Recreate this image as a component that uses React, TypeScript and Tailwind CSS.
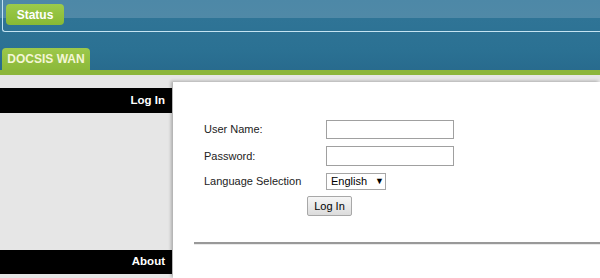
import * as React from "react";

function Field({ label, children }: { label: string; children: React.ReactNode }) {
  return (
    <div className="flex items-center">
      <span className="w-[122px] text-[11px] text-[#222]">{label}</span>
      {children}
    </div>
  );
}

export default function App() {
  return (
    <div className="w-[600px] h-[278px] overflow-hidden font-['Liberation_Sans',Arial,sans-serif] bg-[#e6e6e6]">
      {/* header */}
      <div className="h-[70px] bg-[linear-gradient(to_bottom,#4d88a7_0px,#5089a7_18px,#2f7496_18px,#2b7193_50px,#286b8e_70px)] pt-0">
        <div className="ml-[2px] h-[32px] border-l border-b border-[#c4e4f2] rounded-bl-[3px] pt-[4px] pl-[3px]">
          <div className="w-[58px] h-[21px] rounded-[4px] bg-[linear-gradient(to_bottom,#9ccb4a,#88b935)] flex items-center justify-center text-[12px] font-bold text-white">
            Status
          </div>
        </div>
        <div className="mt-[16px] ml-[2px] w-[88px] h-[22px] rounded-t-[4px] bg-[linear-gradient(to_bottom,#9cc84a,#8cb93a)] flex items-center justify-center text-[12px] font-bold text-[#f4f6d6]">
          DOCSIS WAN
        </div>
      </div>
      <div className="h-[5px] bg-[#8cb63b]" />

      {/* body */}
      <div className="flex h-[203px]">
        <div className="w-[172px] shrink-0 pt-[13px] flex flex-col">
          <div className="h-[25px] bg-black text-white font-bold text-[11.5px] flex items-center justify-end pr-[7px]">
            Log In
          </div>
          <div className="h-[137px]" />
          <div className="h-[24px] bg-black text-white font-bold text-[11.5px] flex items-center justify-end pr-[7px]">
            About
          </div>
        </div>
        <div className="ml-[1px] mt-[7px] flex-1 bg-white shadow-[-2px_-1px_3px_rgba(0,0,0,0.25)]">
          <div className="pt-[38px] pl-[31px] flex flex-col gap-[7px]">
            <Field label="User Name:">
              <div className="w-[128px] h-[19px] border border-[#a0a0a0]" />
            </Field>
            <Field label="Password:">
              <div className="w-[128px] h-[20px] border border-[#a0a0a0]" />
            </Field>
            <Field label="Language Selection">
              <div className="w-[60px] h-[17px] border border-[#a6a6a6] flex items-center pl-[4px] gap-[8px] text-[11px] text-black">
                <span>English</span>
                <span className="text-[9px] leading-none">▼</span>
              </div>
            </Field>
          </div>
          <div className="mt-[6px] ml-[134px] w-[45px] h-[20px] border border-[#a8a8a8] rounded-[2px] bg-[linear-gradient(to_bottom,#f6f6f6,#dcdcdc)] flex items-center justify-center text-[11px] text-black">
            Log In
          </div>
          <div className="mt-[26px] ml-[21px] h-[3px] border-t-2 border-[#999] border-b border-b-[#eaeaea]" />
        </div>
      </div>
    </div>
  );
}
